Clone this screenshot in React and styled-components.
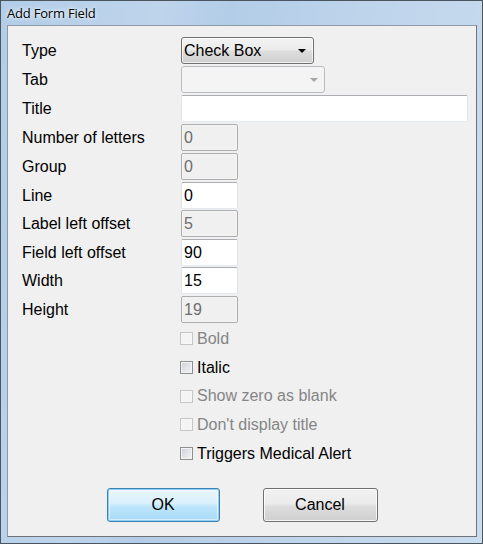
import React from "react";
import styled, { createGlobalStyle, css } from "styled-components";

const Global = createGlobalStyle`
  html, body { margin: 0; padding: 0; background: #ffffff; }
  body { font-family: "Liberation Sans", Arial, sans-serif; }
  * { box-sizing: border-box; }
`;

const Window = styled.div`
  width: 483px;
  height: 544px;
  border: 1px solid #4b5560;
  background:
    linear-gradient(100deg, rgba(255,255,255,0) 0%, rgba(255,255,255,0.14) 28%, rgba(255,255,255,0) 40%, rgba(255,255,255,0.18) 70%, rgba(255,255,255,0.3) 100%),
    #b3cde8;
  display: flex;
  flex-direction: column;
`;

const TitleBar = styled.div`
  height: 24px;
  flex: none;
  padding-left: 6px;
  display: flex;
  align-items: center;
  font-family: "Segoe UI", "Open Sans", "Noto Sans", sans-serif;
  font-size: 13px;
  letter-spacing: -0.2px;
  color: #000;
  text-shadow: 0 0 6px rgba(255, 255, 255, 0.9), 0 0 3px rgba(255, 255, 255, 0.9);
`;

const Client = styled.div`
  flex: 1;
  margin: 0 5px 6px 6px;
  background: #f0f0f0;
  border: 1px solid #8f9aa5;
  border-right-color: #6f7378;
  border-bottom-color: #6f7378;
  padding: 11px 0 0 14px;
  display: flex;
  flex-direction: column;
`;

const Form = styled.div`
  display: grid;
  grid-template-columns: 159px 1fr;
  grid-template-rows: 29px 29px 29px 29px 29px 28px 29px 28px 29px 28px 29px 29px 28px 29px 29px;
  font-size: 16px;
`;

const Label = styled.div`
  grid-column: 1;
  height: 27px;
  line-height: 27px;
  color: #000;
  white-space: nowrap;
`;

const Cell = styled.div`
  grid-column: 2;
  display: flex;
  align-items: flex-start;
`;

const SelectBox = styled.div`
  position: relative;
  width: ${(p) => p.$w}px;
  height: 27px;
  border-radius: 3px;
  padding-left: 2px;
  line-height: 25px;
  font-size: 16px;
  ${(p) =>
    p.$disabled
      ? css`
          border: 1px solid #b9bdc1;
          background: #f4f4f4;
        `
      : css`
          border: 1px solid #707070;
          background: linear-gradient(#f3f3f3 0%, #ebebeb 48%, #dddddd 52%, #cfcfcf 100%);
          color: #000;
          box-shadow: inset 0 0 0 1px rgba(255, 255, 255, 0.7);
        `}
`;

const Arrow = styled.span`
  position: absolute;
  right: ${(p) => (p.$disabled ? 6 : 7)}px;
  top: 11px;
  width: 0;
  height: 0;
  border-left: 4px solid transparent;
  border-right: 4px solid transparent;
  border-top: 4px solid ${(p) => (p.$disabled ? "#a6a6a6" : "#000")};
`;

const TextBox = styled.div`
  width: ${(p) => p.$w}px;
  height: 27px;
  border: 1px solid;
  border-color: #abadb3 #e2e3ea #e3e9ef #e2e3ea;
  border-radius: 2px;
  background: ${(p) => (p.$disabled ? "#f0f0f0" : "#ffffff")};
  color: ${(p) => (p.$disabled ? "#6d6d6d" : "#000")};
  padding-left: 2px;
  line-height: 25px;
  font-size: 16px;
  ${(p) =>
    p.$disabled &&
    css`
      border-color: #adadad;
      box-shadow: inset 0 0 0 1px #f4f4f4;
    `}
`;

const CheckRow = styled.div`
  grid-column: 2;
  margin-left: -1px;
  display: flex;
  align-items: center;
  gap: 4px;
  color: ${(p) => (p.$disabled ? "#858585" : "#000")};
  white-space: nowrap;
`;

const Box = styled.span`
  width: 13px;
  height: 13px;
  flex: none;
  border: 1px solid ${(p) => (p.$disabled ? "#c6c6c6" : "#8e8f8f")};
  background: ${(p) =>
    p.$disabled
      ? "#f4f4f4"
      : "linear-gradient(135deg, #cbcfd5 0%, #e2e4e8 50%, #f4f4f4 100%)"};
  box-shadow: inset 0 0 0 1px ${(p) => (p.$disabled ? "#f7f7f7" : "#f4f4f4")};
`;

const Buttons = styled.div`
  margin-top: 20px;
  margin-left: -14px;
  display: flex;
  justify-content: center;
  gap: 43px;
`;

const Button = styled.div`
  width: ${(p) => p.$w}px;
  height: 34px;
  border-radius: 3px;
  display: flex;
  align-items: center;
  justify-content: center;
  font-size: 16px;
  color: #000;
  ${(p) =>
    p.$default
      ? css`
          border: 1px solid #3c7fb1;
          background: linear-gradient(#eaf6fd 0%, #d9f0fc 45%, #bee6fd 55%, #a7d9f5 100%);
          box-shadow: inset 0 0 0 1px #8ed0f5, inset 0 0 0 2px rgba(255, 255, 255, 0.5);
        `
      : css`
          border: 1px solid #707070;
          background: linear-gradient(#f2f2f2 0%, #ebebeb 45%, #dddddd 55%, #cfcfcf 100%);
          box-shadow: inset 0 0 0 1px rgba(255, 255, 255, 0.8);
        `}
`;

const fields = [
  { label: "Type", kind: "select", w: 133, value: "Check Box" },
  { label: "Tab", kind: "select", w: 144, disabled: true, value: "" },
  { label: "Title", kind: "text", w: 287, value: "" },
  { label: "Number of letters", kind: "text", w: 57, disabled: true, value: "0" },
  { label: "Group", kind: "text", w: 57, disabled: true, value: "0" },
  { label: "Line", kind: "text", w: 57, value: "0" },
  { label: "Label left offset", kind: "text", w: 57, disabled: true, value: "5" },
  { label: "Field left offset", kind: "text", w: 57, value: "90" },
  { label: "Width", kind: "text", w: 57, value: "15" },
  { label: "Height", kind: "text", w: 57, disabled: true, value: "19" },
];

const checks = [
  { label: "Bold", disabled: true },
  { label: "Italic" },
  { label: "Show zero as blank", disabled: true },
  { label: "Don't display title", disabled: true },
  { label: "Triggers Medical Alert" },
];

export default function App() {
  return (
    <>
      <Global />
      <Window>
        <TitleBar>Add Form Field</TitleBar>
        <Client>
          <Form>
            {fields.map((f) => (
              <React.Fragment key={f.label}>
                <Label>{f.label}</Label>
                <Cell>
                  {f.kind === "select" ? (
                    <SelectBox $w={f.w} $disabled={f.disabled}>
                      {f.value}
                      <Arrow $disabled={f.disabled} />
                    </SelectBox>
                  ) : (
                    <TextBox $w={f.w} $disabled={f.disabled}>
                      {f.value}
                    </TextBox>
                  )}
                </Cell>
              </React.Fragment>
            ))}
            {checks.map((c) => (
              <CheckRow key={c.label} $disabled={c.disabled}>
                <Box $disabled={c.disabled} />
                {c.label}
              </CheckRow>
            ))}
          </Form>
          <Buttons>
            <Button $w={113} $default>
              OK
            </Button>
            <Button $w={115}>Cancel</Button>
          </Buttons>
        </Client>
      </Window>
    </>
  );
}
